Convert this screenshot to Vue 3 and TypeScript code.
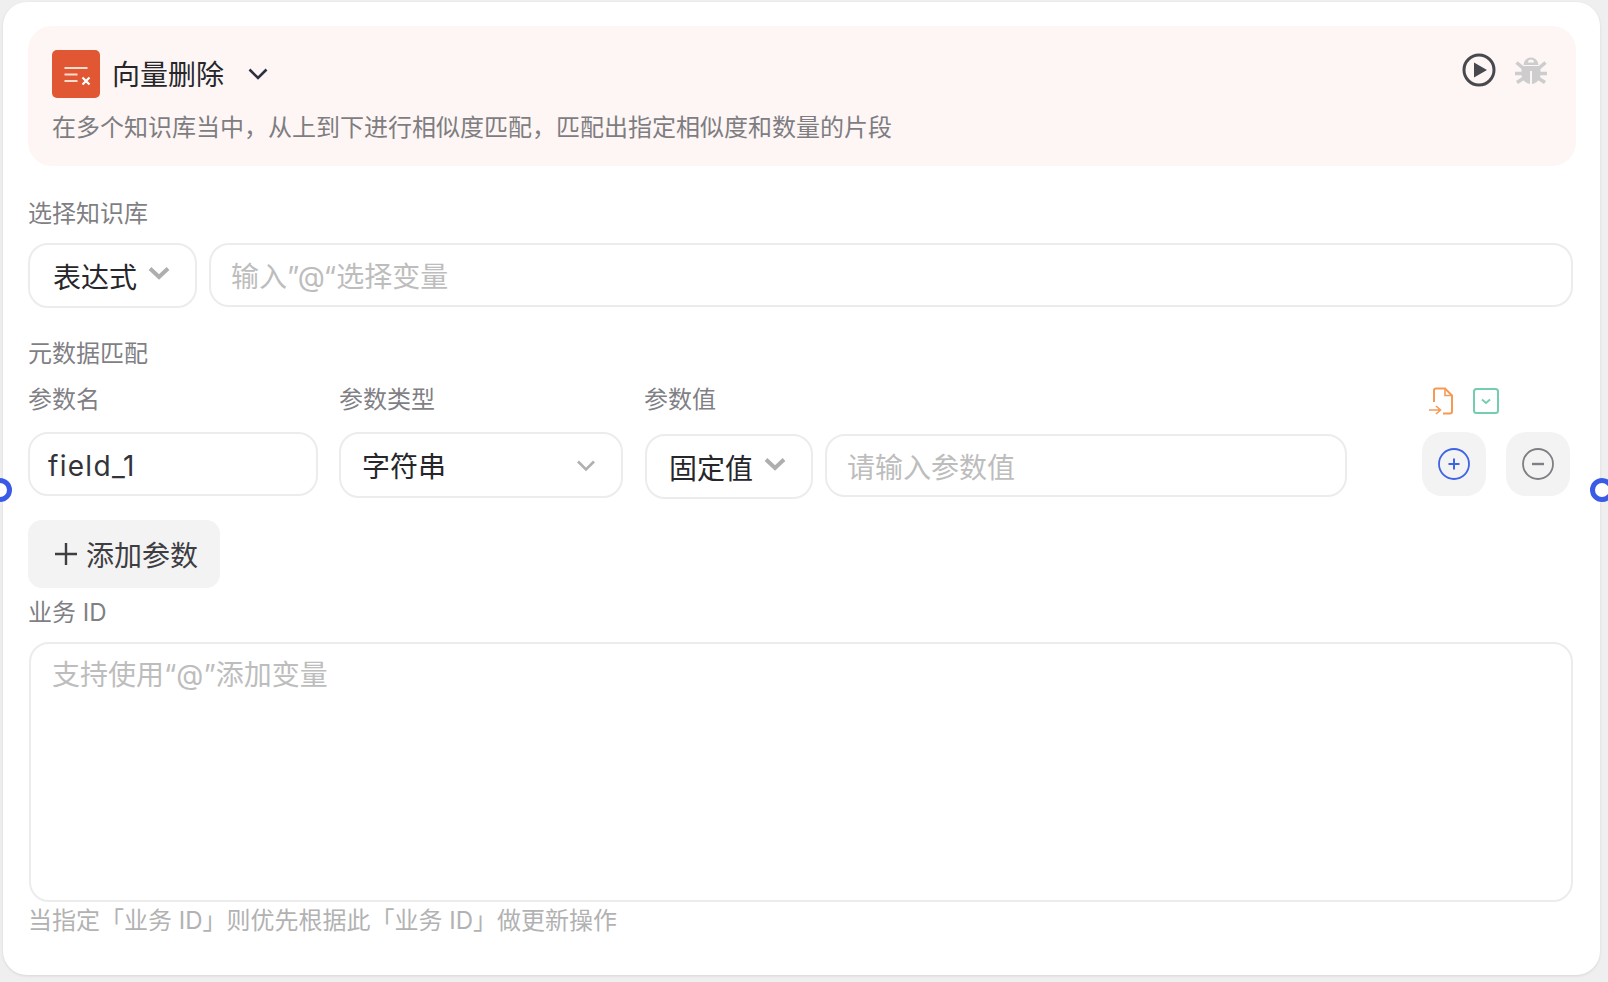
<script setup lang="ts">
const title: string = '向量删除'
</script>

<template>
  <div class="page">
    <div class="card">
      <span class="dot dot-left"></span>
      <span class="dot dot-right"></span>

      <header class="head">
        <div class="head-top">
          <div class="title-row">
            <span class="node-icon">
              <svg width="48" height="48" viewBox="0 0 48 48" fill="none">
                <path d="M12.5 18h23M12.5 24.500h13M12.500 31h13" stroke="#fbdccf" stroke-width="2" />
                <path d="M30.500 27.500l7 7M37.500 27.500l-7 7" stroke="#fff" stroke-width="2.200" />
              </svg>
            </span>
            <span class="title">{{ title }}</span>
            <svg class="title-chev" width="20" height="12" viewBox="0 0 20 12" fill="none">
              <path d="M1.500 1.500L10 10l8.500-8.500" stroke="#2d3040" stroke-width="2.600" />
            </svg>
          </div>
          <div class="head-actions">
            <svg width="36" height="36" viewBox="0 0 36 36" fill="none">
              <circle cx="18" cy="18" r="15" stroke="#48484f" stroke-width="3" />
              <path d="M13 10.500L26 18l-13 7.500z" fill="#48484f" />
            </svg>
            <svg width="34" height="28" viewBox="0 0 34 28" fill="none">
              <path d="M9.500 9a7.500 7.500 0 0 1 15 0zM14 6.500h6a3 3 0 0 0-6 0z" fill="#cdcdcd" fill-rule="evenodd" />
              <path d="M7.500 10h19v8c0 6-4.500 9.500-8.500 10V15h-2v13c-4-.5-8.500-4-8.500-10z" fill="#cdcdcd" />
              <path d="M9 12L2.500 6.500M25 12L31.500 6.500M8 17.500H1M26 17.500h7M10 22L3 26.500M24 22L31 26.500" stroke="#cdcdcd" stroke-width="3.600" />
            </svg>
          </div>
        </div>
        <p class="desc">在多个知识库当中，从上到下进行相似度匹配，匹配出指定相似度和数量的片段</p>
      </header>

      <div class="label first-label">选择知识库</div>
      <div class="kb-row">
        <div class="box select-short tall">
          <span class="value">表达式</span>
          <svg class="chev-bold" width="22" height="14" viewBox="0 0 22 14" fill="none">
            <path d="M2 2.500l9 8.500 9-8.500" stroke="#aeaeae" stroke-width="4" />
          </svg>
        </div>
        <div class="box grow placeholder">输入”@“选择变量</div>
      </div>

      <div class="label meta-label">元数据匹配</div>
      <div class="param-grid param-heads">
        <div class="label">参数名</div>
        <div class="label">参数类型</div>
        <div class="label">参数值</div>
        <div class="bulk-icons">
          <svg width="26" height="28" viewBox="0 0 26 28" fill="none" stroke="#f59a55" stroke-width="2">
            <path d="M6 15V3.500a2 2 0 0 1 2-2h9l7 7v16a2 2 0 0 1-2 2h-7" />
            <path d="M17 1.500v7h7" stroke-width="1.600" />
            <path d="M1 23h11M8 19l4.500 4-4.500 4" stroke-width="1.600" />
          </svg>
          <svg width="26" height="26" viewBox="0 0 26 26" fill="none">
            <rect x="1" y="1" width="24" height="24" rx="2.500" stroke="#74cdad" stroke-width="2" />
            <path d="M9 11.500l4 3.500 4-3.500" stroke="#74cdad" stroke-width="1.800" />
          </svg>
        </div>
      </div>
      <div class="param-grid param-row">
        <div class="box field-name">
          <span class="value latin">field_1</span>
        </div>
        <div class="box select-type">
          <span class="value">字符串</span>
          <svg width="20" height="13" viewBox="0 0 20 13" fill="none">
            <path d="M2 2.500l8 8 8-8" stroke="#b0b0b0" stroke-width="2.600" />
          </svg>
        </div>
        <div class="value-group">
          <div class="box select-short tall">
            <span class="value">固定值</span>
            <svg class="chev-bold" width="22" height="14" viewBox="0 0 22 14" fill="none">
              <path d="M2 2.500l9 8.500 9-8.500" stroke="#aeaeae" stroke-width="4" />
            </svg>
          </div>
          <div class="box grow placeholder">请输入参数值</div>
        </div>
        <div class="row-actions">
          <button class="icon-btn" type="button">
            <svg width="32" height="32" viewBox="0 0 32 32" fill="none" stroke="#3f63e6">
              <circle cx="16" cy="16" r="15" stroke-width="1.800" />
              <path d="M16 10.500v11M10.500 16h11" stroke-width="2" />
            </svg>
          </button>
          <button class="icon-btn" type="button">
            <svg width="32" height="32" viewBox="0 0 32 32" fill="none" stroke="#808084">
              <circle cx="16" cy="16" r="15" stroke-width="1.800" />
              <path d="M10 16h12" stroke-width="2.400" />
            </svg>
          </button>
        </div>
      </div>

      <button class="add-btn" type="button">
        <svg width="22" height="22" viewBox="0 0 22 22" fill="none">
          <path d="M11 0v22M0 11h22" stroke="#3d3d42" stroke-width="2.400" />
        </svg>
        <span>添加参数</span>
      </button>

      <div class="label biz-label">业务 ID</div>
      <div class="box area placeholder">支持使用“@”添加变量</div>
      <div class="hint">当指定「业务 ID」则优先根据此「业务 ID」做更新操作</div>
    </div>
  </div>
</template>

<style>
html,
body {
  margin: 0;
  background: #efefef;
}
</style>

<style scoped>
.page {
  width: 1608px;
  height: 982px;
  padding: 2px 8px 7px 3px;
  box-sizing: border-box;
  overflow: hidden;
  position: relative;
  font-family: Inter, "Noto Sans CJK SC", sans-serif;
}
.card {
  height: 100%;
  box-sizing: border-box;
  background: #fff;
  border-radius: 24px;
  padding: 24px 24px 0 25px;
  box-shadow: 0 1px 3px rgba(0, 0, 0, 0.1);
}
.dot {
  position: absolute;
  top: 478px;
  width: 24px;
  height: 24px;
  box-sizing: border-box;
  border: 5px solid #3a5be6;
  border-radius: 50%;
  background: #fff;
}
.dot-left {
  left: -12px;
}
.dot-right {
  left: 1590px;
}
.head {
  height: 140px;
  box-sizing: border-box;
  background: #fdf6f4;
  border-radius: 24px;
  padding: 24px 24px 0;
}
.head-top {
  display: flex;
  justify-content: space-between;
  align-items: flex-start;
  height: 48px;
}
.title-row {
  display: flex;
  align-items: center;
}
.node-icon {
  width: 48px;
  height: 48px;
  border-radius: 5px;
  background: #e25733;
  display: block;
}
.node-icon svg {
  display: block;
}
.title {
  margin: 0 0 0 12px;
  padding-top: 2px;
  height: 46px;
  font-size: 28px;
  line-height: 46px;
  color: #26262b;
}
.title-chev {
  margin-left: 24px;
}
.head-actions {
  display: flex;
  align-items: center;
  gap: 17px;
  margin: 2px 4px 0 0;
}
.desc {
  margin: 14px 0 0;
  font-size: 24px;
  line-height: 32px;
  color: #7d7d82;
}
.label {
  font-size: 24px;
  line-height: 32px;
  color: #7f7f85;
}
.first-label {
  margin-top: 32px;
}
.kb-row {
  margin-top: 13px;
  margin-right: 3px;
  display: flex;
  align-items: flex-start;
  gap: 12px;
}
.box {
  box-sizing: border-box;
  height: 64px;
  border: 2px solid #ececec;
  border-radius: 20px;
  background: #fff;
  display: flex;
  align-items: center;
}
.tall {
  height: 65px;
}
.grow {
  flex: 1;
}
.select-short {
  width: 169px;
  flex: none;
  padding-left: 23px;
}
.chev-bold {
  margin: -6px 0 0 11px;
}
.value {
  font-size: 28px;
  color: #26262b;
}
.latin {
  font-size: 28px;
  color: #33333a;
  letter-spacing: 1.3px;
  padding-top: 3px;
}
.placeholder {
  font-size: 28px;
  color: #bdbdbd;
  padding-left: 20px;
}
.meta-label {
  margin-top: 30px;
}
.param-grid {
  display: grid;
  grid-template-columns: 290px 284px 703px 1fr;
  column-gap: 21px;
}
.param-heads {
  margin-top: 14px;
}
.bulk-icons {
  display: flex;
  align-items: center;
  gap: 19px;
  padding: 2px 0 0 60px;
}
.param-row {
  margin-top: 16px;
  height: 67px;
  align-items: start;
}
.field-name {
  padding-left: 18px;
}
.select-type {
  width: 284px;
  height: 66px;
  padding: 0 25px 0 21px;
  justify-content: space-between;
}
.value-group {
  display: flex;
  gap: 12px;
  align-items: flex-start;
  padding: 2px 0 0 1px;
}
.value-group .select-short {
  width: 168px;
  padding-left: 22px;
}
.value-group .placeholder {
  height: 63px;
}
.row-actions {
  display: flex;
  gap: 20px;
  padding-left: 54px;
}
.icon-btn {
  width: 64px;
  height: 64px;
  flex: none;
  padding: 0;
  border: 0;
  border-radius: 20px;
  background: #f3f3f3;
  display: flex;
  align-items: center;
  justify-content: center;
}
.add-btn {
  margin-top: 21px;
  width: 192px;
  height: 68px;
  padding: 0 0 0 27px;
  border: 0;
  border-radius: 14px;
  background: #f3f3f3;
  display: flex;
  align-items: center;
  gap: 9px;
  font-family: inherit;
  font-size: 28px;
  color: #3d3d42;
}
.biz-label {
  margin-top: 9px;
}
.area {
  margin: 13px 3px 0 1px;
  height: 260px;
  align-items: flex-start;
  padding: 9px 0 0 21px;
}
.hint {
  margin-top: 3px;
  font-size: 24px;
  line-height: 32px;
  color: #b2b2b2;
}
</style>
